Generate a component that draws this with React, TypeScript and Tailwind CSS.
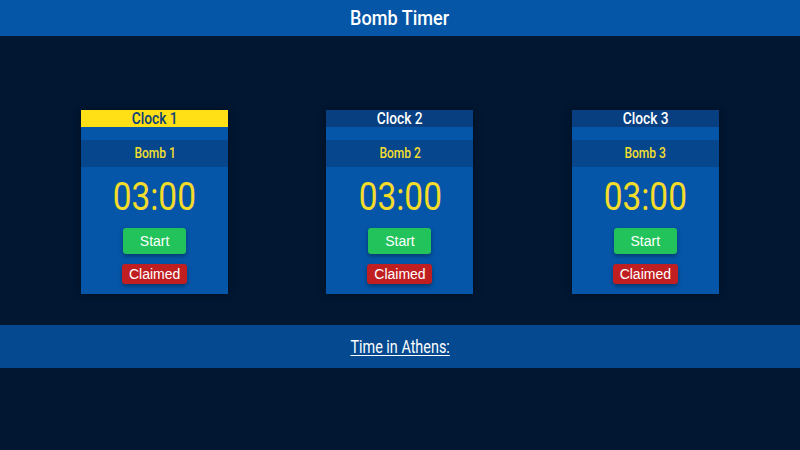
import React from "react";

const clocks = [
  { name: "Clock 1", bomb: "Bomb 1", active: true },
  { name: "Clock 2", bomb: "Bomb 2", active: false },
  { name: "Clock 3", bomb: "Bomb 3", active: false },
];

export default function App() {
  return (
    <div className="w-[800px] h-[450px] bg-[#011732] flex flex-col font-[Roboto,'Liberation_Sans',sans-serif]">
      <header className="h-[36px] bg-[#0556a6] flex items-center justify-center">
        <h1 className="text-white text-[21px] font-medium leading-none scale-x-[0.86]">Bomb Timer</h1>
      </header>
      <main className="grid grid-cols-3 px-[32px] pt-[74px] h-[289px]">
        {clocks.map((c) => (
          <div key={c.name} className="flex justify-center">
            <div className="w-[147px] h-[184px] bg-[#0556a8] flex flex-col items-center shadow-[0_0_8px_rgba(0,0,0,0.4)]">
              <div
                className={
                  c.active
                    ? "w-full h-[17px] flex items-center justify-center text-[16px] font-medium leading-none bg-[#ffe016] text-[#0b3f7a]"
                    : "w-full h-[17px] flex items-center justify-center text-[16px] font-medium leading-none bg-[#073f80] text-white"
                }
              >
                <span className="scale-x-[0.86]">{c.name}</span>
              </div>
              <div className="w-full h-[13px]" />
              <div className="w-full h-[27px] bg-[#06468c] flex items-center justify-center text-[#f5df2e] text-[14px] font-medium">
                <span className="scale-x-[0.86]">{c.bomb}</span>
              </div>
              <div className="text-[#f5dc2a] text-[38px] leading-none mt-[11px] scale-x-[0.88]">03:00</div>
              <button className="mt-[12px] w-[63px] h-[26px] rounded-[3px] bg-[#22c35a] text-white text-[14px] shadow-[0_2px_4px_rgba(0,0,0,0.35)] font-['Liberation_Sans',Arial,sans-serif]">
                Start
              </button>
              <button className="mt-[10px] w-[65px] h-[20px] rounded-[3px] bg-[#c01f22] text-white text-[14px] shadow-[0_2px_4px_rgba(0,0,0,0.35)] font-['Liberation_Sans',Arial,sans-serif]">
                Claimed
              </button>
            </div>
          </div>
        ))}
      </main>
      <footer className="h-[43px] bg-[#054a90] flex items-center justify-center">
        <span className="text-white text-[18px] underline underline-offset-2 scale-x-[0.8]">Time in Athens:</span>
      </footer>
    </div>
  );
}
